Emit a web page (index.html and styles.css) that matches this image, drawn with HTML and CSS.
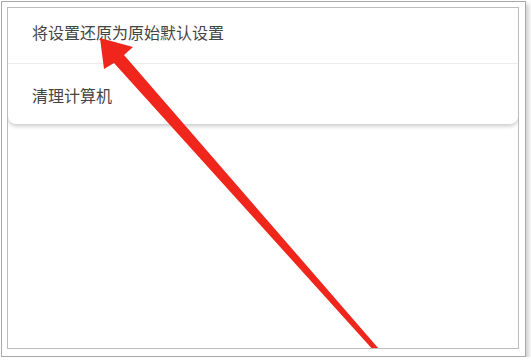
FILE: index.html
```html
<!DOCTYPE html>
<html lang="zh-CN">
<head>
    <meta charset="UTF-8">
    <title>重置和清理</title>
    <link rel="stylesheet" href="styles.css">
</head>
<body>
  <div class="frame">
      <div class="screen">
          <div class="menu-card">
              <div class="menu-item first">将设置还原为原始默认设置</div>
              <div class="menu-item last">清理计算机</div>
          </div>
          <!-- red marker arrow pointing at the first option -->
          <svg class="marker" width="510" height="340" viewBox="8 8 510 340">
              <polygon fill="#f0251b" points="100,38 133,47 124,55 379,349 375,352 114,63 104,69"/>
          </svg>
      </div>
  </div>
</body>
</html>
```

FILE: styles.css
```css
/* General */
*
{
    box-sizing: border-box;
    margin: 0;
    padding: 0;
}
body
{
    background-color: #ffffff;
    font-family: "Noto Sans CJK SC", "Noto Sans", sans-serif;
    color: #333;
}

/* picture frame */
.frame
{
    margin: 1px 0 0 1px;
    width: 525px;
    height: 356px;
    padding: 5px 6px 7px 5px;
    border: 1px solid #a9a9a9;
    background-color: #ffffff;
    box-shadow: 3px 3px 4px rgba(0, 0, 0, 0.18);
}
.screen
{
    position: relative;
    width: 512px;
    height: 342px;
    border: 1px solid #bdbdbd;
    overflow: hidden;
    background-color: #ffffff;
}

/* menu */
.menu-card
{
    background-color: #ffffff;
    border-radius: 0 0 8px 8px;
    box-shadow: 0 2px 4px rgba(0, 0, 0, 0.22);
}
.menu-item
{
    font-size: 16px;
    line-height: 22px;
    padding-left: 24px;
    color: #444;
}
.menu-item.first
{
    height: 56px;
    padding-top: 13px;
    border-bottom: 1px solid #ececec;
}
.menu-item.last
{
    height: 60px;
    padding-top: 20px;
}

/* overlay */
.marker
{
    position: absolute;
    left: 0;
    top: 0;
}
```
